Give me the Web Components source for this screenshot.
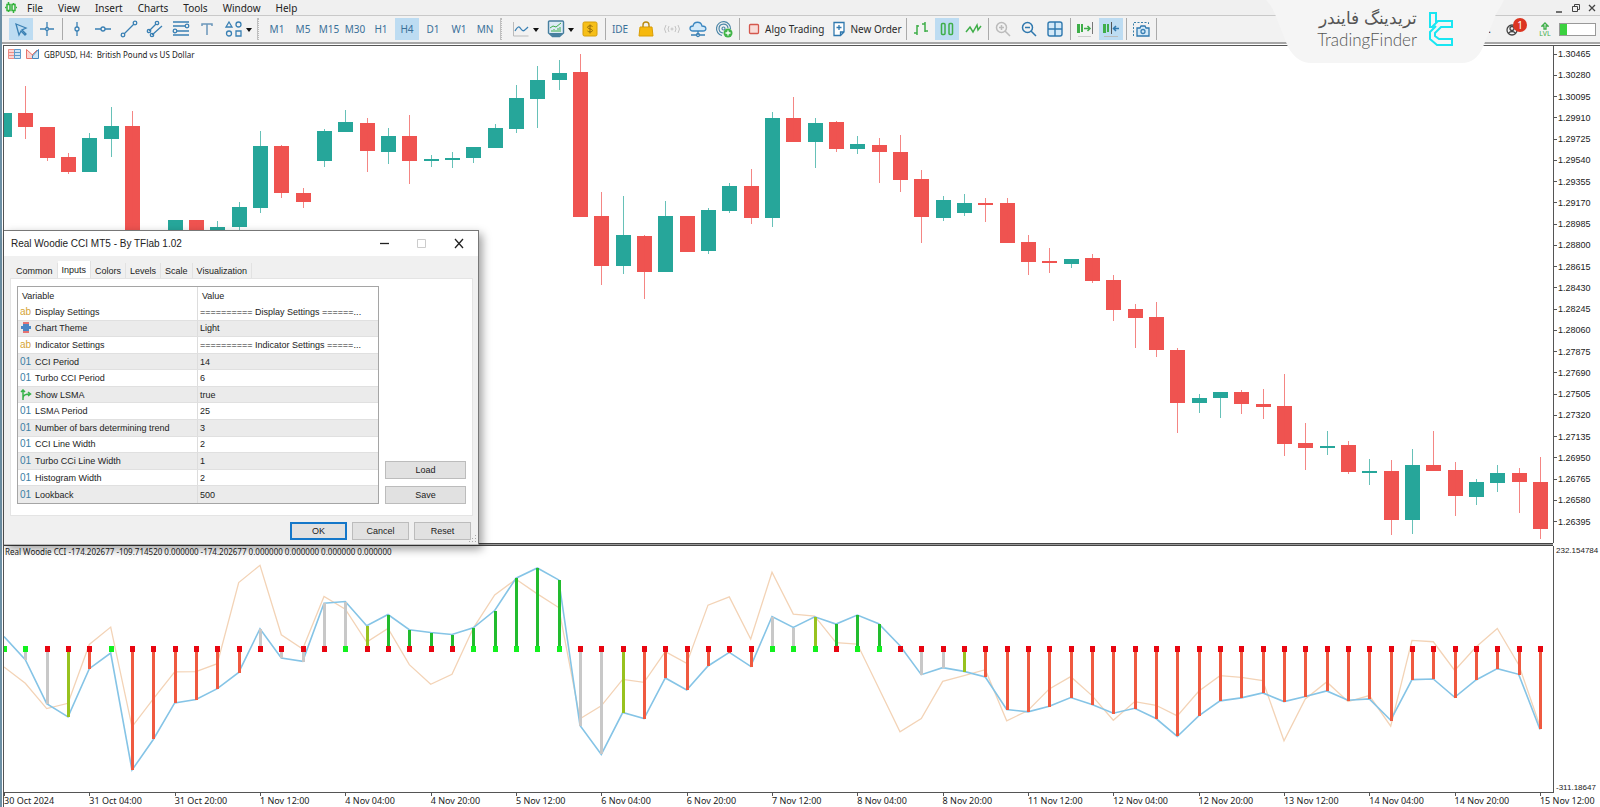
<!DOCTYPE html>
<html lang="en">
<head>
<meta charset="utf-8">
<title>GBPUSD, H4</title>
<style>
  html, body { margin: 0; height: 100%; }
  body { font-family: "Noto Sans", "Open Sans", sans-serif; font-size: 10px; color: #222; background: #fff; overflow: hidden; --compact: "Liberation Sans", Arial, sans-serif; }
</style>
</head>
<body>
<trade-terminal>
  <menu-bar slot="menu"></menu-bar>
  <tool-bar slot="tools"></tool-bar>
  <price-pane slot="price"></price-pane>
  <cci-pane slot="indicator"></cci-pane>
  <time-axis slot="time"></time-axis>
  <inputs-dialog slot="dialog"></inputs-dialog>
  <brand-badge slot="brand"></brand-badge>
</trade-terminal>

<script>
// each row: [up, bodyTop, bodyBottom, wickTop, wickBottom]
const CANDLES = [
  [1,113,137,113,137],[0,113,127,86,139],[0,127,158,127,161],[0,157,172,153,174],[1,138,172,133,172],
  [1,126,139,107,157],[0,126,262,111,270],[0,262,274,250,280],[1,220,262,220,270],[0,220,240,220,250],
  [1,227,240,221,250],[1,207,227,202,230],[1,146,208,131,213],[0,146,193,145,198],[0,193,202,188,208],
  [1,131,161,129,167],[1,122,132,110,132],[0,123,151,118,172],[1,136,152,128,164],[0,136,161,115,184],
  [1,159,161,155,167],[1,158,160,152,168],[1,147,158,147,163],[1,128,148,124,148],[1,98,129,85,133],
  [1,80,99,66,128],[1,73,80,60,90],[0,72,217,54,217],[0,216,266,192,285],[1,235,266,196,274],
  [0,236,272,235,299],[1,216,272,201,272],[0,216,252,216,252],[1,210,251,208,254],[1,186,211,183,213],
  [0,186,218,169,224],[1,118,218,112,227],[0,118,142,97,142],[1,123,142,118,168],[0,122,149,121,152],
  [1,144,149,136,154],[0,145,152,138,183],[0,152,180,135,192],[0,179,217,170,243],[1,200,218,196,221],
  [1,203,213,194,216],[0,203,205,198,222],[0,203,243,198,243],[0,242,262,235,275],[0,261,263,248,273],
  [1,259,264,259,268],[0,258,281,254,283],[0,280,310,275,321],[0,309,318,304,348],[0,317,350,302,357],
  [0,350,403,348,432],[1,398,403,394,413],[1,392,398,392,417],[0,392,404,390,414],[0,404,407,389,418],
  [0,406,443,374,455],[0,442,447,422,469],[1,445,447,430,454],[0,444,471,440,473],[1,470,472,458,484],
  [0,470,519,459,534],[1,464,519,448,533],[0,464,470,430,470],[0,469,495,461,515],[1,481,496,478,504],
  [1,472,482,464,491],[0,472,481,467,512],[0,481,528,456,538]
];

// CCI and turbo CCI, in thirds of a plot unit
const CCI = [290,360,492,532,387,340,692,600,490,480,447,398,267,355,365,190,185,258,224,270,278,284,264,212,
  115,84,120,558,645,519,537,415,451,379,338,380,230,263,231,253,226,252,318,405,384,395,412,510,517,500,474,
  495,521,506,537,591,529,484,475,460,486,471,454,482,478,542,420,418,473,421,387,404,570];
const TURBO = [382,431,507,491,314,262,562,478,397,396,372,128,76,285,328,170,208,307,266,375,434,404,265,165,
  118,162,203,538,499,419,428,336,371,196,171,298,97,223,229,309,313,445,577,537,425,408,390,544,513,448,411,
  468,542,486,497,529,455,408,413,423,604,478,427,486,468,560,302,306,392,322,266,375,560];
// histogram state per bar: x neutral, y turning, r down, g up, - none
const TREND = "-xxyr-rrrrrrxxxxxygggggggggxxyrrrrrrxxyggg-xxyrrrrrrrrrrrrrrrrrrrrrrrrrrr";
const LSMA_UP = [0,1,5,16,22,23,24,25,26,36,37,38,40,41];
const STEP = 1536 / 72;

const TIMES = ["30 Oct 2024","31 Oct 04:00","31 Oct 20:00","1 Nov 12:00","4 Nov 04:00","4 Nov 20:00","5 Nov 12:00",
  "6 Nov 04:00","6 Nov 20:00","7 Nov 12:00","8 Nov 04:00","8 Nov 20:00","11 Nov 12:00","12 Nov 04:00",
  "12 Nov 20:00","13 Nov 12:00","14 Nov 04:00","14 Nov 20:00","15 Nov 12:00"];

const INPUTS = [
  ["ab","Display Settings","========== Display Settings ======..."],
  ["theme","Chart Theme","Light"],
  ["ab","Indicator Settings","========== Indicator Settings =====..."],
  ["01","CCI Period","14"],
  ["01","Turbo CCI Period","6"],
  ["bool","Show LSMA","true"],
  ["01","LSMA Period","25"],
  ["01","Number of bars determining trend","3"],
  ["01","CCI Line Width","2"],
  ["01","Turbo CCi Line Width","1"],
  ["01","Histogram Width","2"],
  ["01","Lookback","500"]
];

// 20x20 toolbar icons, drawn around the centre (10, 10)
const B = 'fill="none" stroke="#3a80b4" stroke-width="1.3"';
const G = 'fill="none" stroke="#3fae49" stroke-width="1.5"';
const ICONS = {
  cursor: `<path ${B} d="M5 5l10 4-4 2 4 4-1 1-4-4-2 4z"/>`,
  cross: `<path ${B} d="M10 3v5M10 12v5M3 10h5M12 10h5"/><circle ${B} cx="10" cy="10" r="1.5"/>`,
  vline: `<path ${B} d="M10 3v5M10 12v5"/><circle ${B} cx="10" cy="10" r="2"/>`,
  hline: `<path ${B} d="M2 10h6M12 10h6"/><circle ${B} cx="10" cy="10" r="2"/>`,
  trend: `<path ${B} d="M5 15L15 5"/><circle ${B} cx="4" cy="16" r="1.8"/><circle ${B} cx="16" cy="4" r="1.8"/>`,
  channel: `<path ${B} d="M4 12l7-7M7 16L17 7"/><circle ${B} cx="4" cy="12" r="1.7"/><circle ${B} cx="12" cy="4" r="1.7"/><circle ${B} cx="7" cy="16" r="1.7"/>`,
  fib: `<path ${B} d="M2 3h16M2 7h12M6 12h12M2 16h16"/><circle ${B} cx="16" cy="7" r="1.8"/><circle ${B} cx="4" cy="12" r="1.8"/>`,
  label: `<path fill="none" stroke="#6b97ba" stroke-width="1.5" d="M5 7V5h10v2M10 5v11"/>`,
  shapes: `<path ${B} d="M5 3l3 5H2zM12 12h5v5h-5z"/><circle ${B} cx="14.500" cy="5.500" r="2.500"/><circle ${B} cx="5" cy="14.500" r="2.500"/>`,
  chart: `<path fill="none" stroke="#bbb" d="M2.500 3v14h15"/><path ${B} d="M4 12c3-5 4-5 6-2s3 2 7-2"/>`,
  indicators: `<path fill="#dcebf5" stroke="#477f9f" stroke-width="1.400" d="M2.500 3q0-1 1-1h13q1 0 1 1v11l-4 3.500h-7L2.500 14z"/><path fill="#477f9f" d="M3 14h14l-4 3.500H7z"/><path fill="none" stroke="#3fae49" d="M4 9l3-2 3 1 5-4M6 13v-2M8 13v-3M10 13v-2M12 13V9M14 13V8"/>`,
  deposit: `<rect x="3" y="3" width="14" height="14" rx="1.500" fill="#f6bf18" stroke="#d59e0a"/><path fill="none" stroke="#936b08" d="M12.500 7.500c-1-1-5-1-5 .8s5 1.400 5 3.200-4 1.800-5 .5M10 5.500v9"/>`,
  market: `<path fill="#f6b90e" stroke="#d99d07" d="M4 8h12l1 9H3z"/><path fill="none" stroke="#b98a10" stroke-width="1.400" d="M7 8V6c0-4 6-4 6 0v2"/>`,
  signal: `<g fill="none" stroke="#c4c4c4"><path d="M4 6q-3 4 0 8M16 6q3 4 0 8M7 7q-2 3 0 6M13 7q2 3 0 6"/><circle cx="10" cy="10" r="1"/></g>`,
  cloud: `<path fill="#d3e9f8" stroke="#3a86c0" stroke-width="1.300" d="M5 12c-4 0-4-5 0-5 1-5 8-5 9 0 5 0 5 5 1 5z"/><path ${B} d="M10 12v4M3 16h5M12 16h5"/><circle ${B} cx="10" cy="16" r="1.500"/>`,
  vps: `<g fill="none" stroke="#4d87a8" stroke-width="1.200"><path d="M8 16.500A7 7 0 1 1 16.500 10M9 14a4.500 4.500 0 1 1 5-5"/><circle cx="9.500" cy="9.500" r="1.500"/></g><circle cx="14" cy="14" r="4.500" fill="#42b549"/><path stroke="#fff" stroke-width="1.300" d="M11.500 14h5M14 11.500v5"/>`,
  algo: `<rect x="5.500" y="5.500" width="9" height="9" rx="1" fill="#f8dcd8" stroke="#d4574d" stroke-width="1.300"/>`,
  order: `<path fill="#fff" stroke="#2f78ae" stroke-width="1.300" d="M5 3.500h10V13l-3.500 3.500H5zM15 13h-3.500v3.500"/><path stroke="#2f78ae" stroke-width="1.300" d="M10 6v5M7.500 8.500h5"/>`,
  bars: `<path ${G} d="M6 6v10M3 14h3M6 7h2M14 3v10M11 5h3M14 12h3"/>`,
  candles: `<rect ${G} x="4.500" y="4.500" width="3.500" height="11" rx="1"/><rect ${G} x="12" y="4.500" width="3.500" height="11" rx="1"/>`,
  line: `<path ${G} d="M3 13l4-5 3 5 4-7 1 5 3-4"/>`,
  zoomin: `<g fill="none" stroke="#bbb" stroke-width="1.500"><circle cx="8.500" cy="8.500" r="5"/><path d="M12 12l5 5M6 8.500h5M8.500 6v5"/></g>`,
  zoomout: `<g fill="none" stroke="#2f78ae" stroke-width="1.500"><circle cx="8.500" cy="8.500" r="5"/><path d="M12 12l5 5M6 8.500h5"/></g>`,
  grid: `<rect x="3" y="3" width="14" height="14" rx="2" fill="#d3e9f8" stroke="#2f78ae" stroke-width="1.400"/><path stroke="#2f78ae" stroke-width="1.400" d="M10 3v14M3 10h14"/>`,
  scroll: `<path fill="#3fae49" d="M2 5h3v9H2zM6 5h2v8H6z"/><path ${G} d="M9 9.500h6M12.500 7l2.500 2.500-2.500 2.500"/><path stroke="#777" d="M17.500 3v12"/><path stroke="#ccc" d="M3 17.500h13"/>`,
  shift: `<path fill="#3fae49" d="M2 5h3v9H2zM6 5h2v8H6z"/><path stroke="#555" d="M10.500 3v12"/><path fill="none" stroke="#2f78ae" stroke-width="1.500" d="M18 9.500h-5M15 7l-2.500 2.500L15 12"/><path stroke="#bbb" d="M3 17.500h14"/>`,
  camera: `<path fill="none" stroke="#3a7fa8" stroke-dasharray="2 1.500" d="M2.500 17V3.500h15V6"/><path fill="#d3e9f8" stroke="#2f78ae" stroke-width="1.300" d="M6 9h3l1-2h4l1 2h3v8H6z"/><circle ${B} cx="12" cy="12.500" r="2"/>`
};

function icon(name) {
  return `<svg viewBox="0 0 20 20" width="20" height="20" aria-hidden="true">${ICONS[name]}</svg>`;
}

class TradeTerminal extends HTMLElement {
  connectedCallback() {
    this.attachShadow({ mode: "open" }).innerHTML = `
      <style>
        :host { display: flex; flex-direction: column; height: 100vh; position: relative; box-sizing: border-box; border-left: 2px solid #6d90a5; }
        .charts { flex: 1; min-height: 0; display: flex; flex-direction: column; margin-left: 1px; border-left: 1px solid #555; border-top: 1px solid #555; }
        .price { flex: 496; min-height: 0; display: grid; }
        .split { height: 3px; box-sizing: border-box; border-top: 1px solid #444; border-bottom: 1px solid #444; background: #999; margin-right: 47px; }
        .indicator { flex: 247; min-height: 0; display: grid; }
        slot[name="dialog"]::slotted(*) { position: absolute; left: 2px; top: 230px; }
        slot[name="brand"]::slotted(*) { position: absolute; right: 96px; top: 0; }
      </style>
      <slot name="menu"></slot>
      <slot name="tools"></slot>
      <div class="charts">
        <div class="price"><slot name="price"></slot></div>
        <div class="split"></div>
        <div class="indicator"><slot name="indicator"></slot></div>
        <slot name="time"></slot>
      </div>
      <slot name="dialog"></slot>
      <slot name="brand"></slot>`;
  }
}

class MenuBar extends HTMLElement {
  connectedCallback() {
    const items = ["File", "View", "Insert", "Charts", "Tools", "Window", "Help"];
    this.attachShadow({ mode: "open" }).innerHTML = `
      <style>
        :host { display: flex; align-items: center; height: 15px; background: #f0f0f0; border-bottom: 1px solid #c9c9c9; padding: 0 3px 0 3px; font-size: 10px; }
        nav { display: flex; flex: 1; margin-left: 10px; gap: 15px; }
        button { font: inherit; line-height: 14px; color: #222; border: 0; padding: 0; background: none; }
        .win { display: flex; gap: 7px; }
        .win button { display: flex; }
      </style>
      <svg width="12" height="13" viewBox="0 0 12 13" aria-hidden="true"><g fill="none" stroke="#35b33c" stroke-width="1.500"><path d="M3.500 1v2M3.500 9v2M8.500 2v2M8.500 10v2M0 6.500h1.500M11 6.500h1"/><rect x="2" y="3.500" width="3" height="6"/><rect x="7" y="3.500" width="3" height="6"/></g></svg>
      <nav>${items.map(t => `<button>${t}</button>`).join("")}</nav>
      <div class="win">
        <button aria-label="Minimize"><svg width="9" height="10"><path stroke="#444" stroke-width="1.500" d="M1 9h6"/></svg></button>
        <button aria-label="Restore"><svg width="10" height="10"><path fill="none" stroke="#444" d="M3.500 3V1.500h5v5H7M1.500 3.500h5v5h-5z"/></svg></button>
        <button aria-label="Close"><svg width="9" height="10"><path stroke="#444" stroke-width="1.300" d="M1 2l6 6M7 2L1 8"/></svg></button>
      </div>`;
  }
}

class ToolButton extends HTMLElement {
  connectedCallback() {
    const name = this.getAttribute("icon");
    const label = this.getAttribute("label") || name;
    this.attachShadow({ mode: "open" }).innerHTML = `
      <style>
        :host { display: flex; flex: none; min-width: 26px; justify-content: center; }
        button { display: flex; align-items: center; justify-content: center; min-width: 24px; height: 22px; padding: 0; border: 0; background: none; font: inherit; color: inherit; white-space: nowrap; }
        :host([on]) button { background: #bddcf2; }
        svg { flex: none; }
        :host([text]) { color: #2b2b2b; }
        :host([text]) button { padding: 0 2px 0 3px; gap: 1px; }
        :host([drop]) { margin-right: 9px; }
        i { width: 0; margin: 2px -10px 0 2px; border: 3px solid transparent; border-top: 4px solid #111; border-bottom: 0; }
      </style>
      <button aria-label="${label}">${name ? icon(name) : ""}<slot></slot>${this.hasAttribute("drop") ? "<i></i>" : ""}</button>`;
  }
}

class ToolBar extends HTMLElement {
  connectedCallback() {
    const t = (names, on) => names.split(" ").map(n => `<tool-button icon="${n}"${n === on ? " on" : ""}></tool-button>`).join("");
    const frames = ["M1", "M5", "M15", "M30", "H1", "H4", "D1", "W1", "MN"];
    this.attachShadow({ mode: "open" }).innerHTML = `
      <style>
        :host { display: flex; align-items: center; height: 26px; padding-left: 6px; background: #f2f2f2; border-bottom: 2px solid #a6a6a6; box-shadow: 0 1px #fff; margin-bottom: 1px; color: #3a7099; }
        s { flex: none; width: 1px; height: 22px; margin: 0 1px 0 2px; background: #aaa; }
        s.grip { margin: 0 5px 0 2px; width: 0; background: none; border-left: 1px solid #c0c0c0; border-right: 1px dotted #bbb; }
        .status { display: flex; align-items: center; gap: 7px; margin-left: auto; padding-right: 4px; color: #222; }
        .account { position: relative; display: flex; margin: 0 5px 0 8px; }
        .badge { position: absolute; left: 7px; top: -4px; width: 14px; height: 14px; border-radius: 50%; background: #dc3420; color: #fff; font-size: 10px; line-height: 14px; text-align: center; }
        .lvl { display: flex; flex-direction: column; align-items: center; width: 14px; color: #3fae49; font-size: 7px; line-height: 7px; }
        .battery { width: 37px; height: 13px; box-sizing: border-box; border: 1px solid #999; background: linear-gradient(90deg, #3bd13f 7px, #fff 7px); }
      </style>
      ${t("cursor cross", "cursor")}<s></s>
      ${t("vline hline trend channel fib label")}<tool-button icon="shapes" drop></tool-button><s class="grip"></s>
      ${frames.map(f => `<tool-button label="${f}"${f === "H4" ? " on" : ""}>${f}</tool-button>`).join("")}<s class="grip"></s>
      <tool-button icon="chart" drop></tool-button><tool-button icon="indicators" drop></tool-button>${t("deposit")}<s></s>
      <tool-button label="IDE">IDE</tool-button>${t("market signal cloud vps")}<s></s>
      <tool-button icon="algo" label="Algo Trading" text>Algo Trading</tool-button>
      <tool-button icon="order" label="New Order" text>New Order</tool-button><s></s>
      ${t("bars candles line", "candles")}<s></s>
      ${t("zoomin zoomout grid")}<s></s>
      ${t("scroll shift", "shift")}<s></s>${t("camera")}<s></s>
      <div class="status">
        <span>.</span>
        <span class="account">
          <svg width="20" height="14" aria-hidden="true"><g fill="none" stroke="#444" stroke-width="1.300"><circle cx="6" cy="8" r="5"/><circle cx="6" cy="6.500" r="2"/><path d="M2.500 11q3.500-3 7 0"/></g></svg>
          <span class="badge">1</span>
        </span>
        <span class="lvl"><svg width="8" height="8" aria-hidden="true"><path fill="none" stroke="#3fae49" stroke-width="1.300" d="M4 1l3 3H5v3H3V4H1z"/></svg>LVL</span>
        <span class="battery"></span>
      </div>`;
  }
}

class PricePane extends HTMLElement {
  connectedCallback() {
    const bars = CANDLES.map(([up, top, bottom, high, low], i) => {
      const x = Math.round(i * STEP);
      const fill = up ? "#26a69a" : "#ef5350";
      return `<path fill="${fill}" d="M${x - 7} ${top - 46}h15v${bottom - top}h-15z"/><path fill="${fill}" opacity=".7" d="M${x} ${high - 46}h1v${low - high}h-1z"/>`;
    }).join("");
    const prices = Array.from({ length: 23 }, (_, i) => ((130465 - 185 * i) / 100000).toFixed(5));
    this.attachShadow({ mode: "open" }).innerHTML = `
      <style>
        :host { display: grid; grid-template: minmax(0, 1fr) / minmax(0, 1fr) 46px; min-height: 0; font-size: 8px; }
        .plot { position: relative; min-height: 0; border-right: 1px solid #555; }
        .plot > svg { display: block; width: 100%; height: 100%; }
        header { position: absolute; left: 4px; top: 0; display: flex; align-items: center; gap: 4px; height: 16px; white-space: pre; }
        ol { display: flex; flex-direction: column; justify-content: space-between; margin: 0; padding: 2px 0 15px; list-style: none; font-family: var(--compact); font-size: 9px; line-height: 12px; }
        li { display: flex; align-items: center; gap: 1px; }
        li::before { content: ""; width: 3px; height: 1px; background: #555; }
      </style>
      <div class="plot">
        <svg viewBox="0 0 1549 496" preserveAspectRatio="none" shape-rendering="crispEdges">${bars}</svg>
        <header>
          <svg width="14" height="11"><path fill="#fbd5d2" stroke="#eb8d86" d="M.5.500h6v9h-6zM.5 3.500h6M.5 6.500h6"/><path fill="#cfe4f4" stroke="#5f9bca" d="M6.500.500h6v9h-6zM6.500 3.500h6M6.500 6.500h6"/></svg>
          <svg width="14" height="11"><path fill="#fbd5d2" stroke="#e8746c" d="M.5.500v9h6V6z"/><path fill="#cfe4f4" stroke="#4387bd" d="M12.500.500v9h-6V7z"/><path fill="none" stroke="#e8746c" d="M6 6l5-5"/></svg>
          <span>GBPUSD, H4:  British Pound vs US Dollar</span>
        </header>
      </div>
      <ol>${prices.map(p => `<li>${p}</li>`).join("")}</ol>`;
  }
}

class CciPane extends HTMLElement {
  connectedCallback() {
    const y = v => v / 3 - 6;
    const line = data => data.map((v, i) => `${(i * STEP).toFixed(1)},${y(v).toFixed(1)}`).join(" ");
    const colors = { x: "#c8c8c8", y: "#98c21f", r: "#ef5a40", g: "#22bb2e" };
    const bars = CCI.map((v, i) => {
      const fill = colors[TREND[i]];
      if (!fill) return "";
      const a = Math.round(Math.min(y(v), 103));
      const b = Math.round(Math.max(y(v), 103));
      return `<path fill="${fill}" d="M${Math.round(i * STEP) - 1} ${a}h3v${b - a}h-3z"/>`;
    }).join("");
    const dots = CCI.map((v, i) => `<path fill="${LSMA_UP.includes(i) ? "#12f01e" : "#e80510"}" d="M${Math.round(i * STEP) - 2} 100h5v6h-5z"/>`).join("");
    this.attachShadow({ mode: "open" }).innerHTML = `
      <style>
        :host { display: grid; grid-template: minmax(0, 1fr) / minmax(0, 1fr) 46px; min-height: 0; font-size: 8px; }
        .plot { position: relative; min-height: 0; border-right: 1px solid #555; border-bottom: 1px solid #555; }
        svg { display: block; width: 100%; height: 100%; }
        .title { position: absolute; left: 1px; top: 0; line-height: 12px; }
        .scale { display: flex; flex-direction: column; justify-content: space-between; padding-left: 2px; font-family: var(--compact); line-height: 10px; }
      </style>
      <div class="plot">
        <svg viewBox="0 0 1549 247" preserveAspectRatio="none">
          <polyline fill="none" stroke="#f3d3b6" stroke-width="1.300" points="${line(TURBO)}"/>
          <polyline fill="none" stroke="#85c4e6" stroke-width="1.600" points="${line(CCI)}"/>
          <g shape-rendering="crispEdges">${bars}${dots}</g>
        </svg>
        <span class="title">Real Woodie CCI -174.202677 -109.714520 0.000000 -174.202677 0.000000 0.000000 0.000000 0.000000</span>
      </div>
      <div class="scale"><span>232.154784</span><span>-311.18647</span></div>`;
  }
}

class TimeAxis extends HTMLElement {
  connectedCallback() {
    this.attachShadow({ mode: "open" }).innerHTML = `
      <style>
        :host { display: flex; height: 14px; margin-right: 47px; font-size: 9px; line-height: 15px; }
        span { flex: 4 0 0; width: 0; white-space: nowrap; background: linear-gradient(#555, #555) 0 0 / 1px 3px no-repeat; }
        span:last-child { flex-grow: .61; }
      </style>
      ${TIMES.map(t => `<span>${t}</span>`).join("")}`;
  }
}

class InputsDialog extends HTMLElement {
  connectedCallback() {
    const kinds = {
      ab: '<b class="ab">ab</b>',
      "01": '<b>01</b>',
      theme: '<svg width="12" height="12"><path fill="#e57373" d="M3 0h6v3H3zM3 8h6v3H3z"/><path fill="#4a86c5" d="M1 4h10v3H1zM3 2h6v7H3z"/></svg>',
      bool: '<svg width="12" height="12"><path fill="none" stroke="#37b34a" stroke-width="1.500" d="M3 11V1M1 3l2-2 2 2M3 9q0-4 7-4M8 3l2.500 2L8 7"/></svg>'
    };
    const rows = INPUTS.map(([kind, name, value]) =>
      `<tr><td><span class="name">${kinds[kind]}${name}</span></td><td>${value}</td></tr>`).join("");
    const tabs = ["Common", "Inputs", "Colors", "Levels", "Scale", "Visualization"];
    this.attachShadow({ mode: "open" }).innerHTML = `
      <style>
        :host { display: flex; flex-direction: column; width: 475px; height: 315px; background: #f0f0f0; border: 1px solid #777; border-left: 0; border-bottom-color: #bbb; box-sizing: border-box; box-shadow: 3px 4px 9px rgba(0, 0, 0, .4); font-family: var(--compact); font-size: 9px; }
        header { display: flex; align-items: center; height: 25px; padding: 0 13px 0 7px; background: #fff; font-size: 10px; line-height: 14px; }
        header span { flex: 1; }
        header button { display: flex; margin-left: 26px; padding: 0; border: 0; background: none; }
        .tabs { display: flex; align-items: flex-end; margin: 5px 0 0 8px; height: 17px; }
        .tabs button { height: 15px; padding: 0 4px; border: 0; border-right: 1px solid #e2e2e2; background: none; font: inherit; color: inherit; }
        .tabs button[aria-selected="true"] { height: 17px; background: #fff; }
        .panel { flex: 1; min-height: 0; display: flex; gap: 6px; margin: 0 5px 0 6px; padding: 7px 6px 11px; background: #fff; border: 1px solid #e4e4e4; }
        table { width: 362px; border-collapse: separate; border-spacing: 0; border: 1px solid #a5a5a5; table-layout: fixed; line-height: 12px; }
        th, td { height: 15px; padding: 0 2px; font-weight: normal; text-align: left; white-space: nowrap; box-sizing: border-box; }
        th { height: 17px; padding: 0 4px; }
        th:first-child, td:first-child { border-right: 1px solid #ddd; }
        td { border-bottom: 1px solid #e0e0e0; }
        tr:last-child td { border-bottom: 0; }
        tbody tr:nth-child(even) { background: #ebebeb; }
        .name { display: flex; align-items: center; gap: 3px; }
        b { width: 12px; color: #3b80a5; font-weight: normal; font-size: 10px; line-height: 12px; }
        b.ab { color: #d6a437; }
        .side { flex: 1; display: flex; flex-direction: column; justify-content: flex-end; gap: 7px; }
        .act { height: 18px; padding: 0; border: 1px solid #bcbcbc; background: #e1e1e1; font: inherit; color: inherit; }
        .act.ok { border: 2px solid #1477c9; }
        footer { position: relative; display: flex; justify-content: flex-end; gap: 5px; padding: 6px 7px 4px; }
        footer .act { width: 57px; }
        footer svg { position: absolute; right: 0; bottom: 0; }
      </style>
      <header>
        <span>Real Woodie CCI MT5 - By TFlab 1.02</span>
        <button aria-label="Minimize"><svg width="11" height="11"><path stroke="#222" stroke-width="1.300" d="M1 5.500h9"/></svg></button>
        <button aria-label="Maximize"><svg width="11" height="11"><path fill="none" stroke="#ccc" d="M1.500 1.500h8v8h-8z"/></svg></button>
        <button aria-label="Close"><svg width="12" height="11"><path stroke="#222" stroke-width="1.300" d="M2 1l8 9M10 1l-8 9"/></svg></button>
      </header>
      <div class="tabs" role="tablist">${tabs.map(t => `<button role="tab" aria-selected="${t === "Inputs"}">${t}</button>`).join("")}</div>
      <div class="panel">
        <table>
          <colgroup><col style="width: 50%"><col></colgroup>
          <thead><tr><th>Variable</th><th>Value</th></tr></thead>
          <tbody>${rows}</tbody>
        </table>
        <div class="side"><button class="act">Load</button><button class="act">Save</button></div>
      </div>
      <footer>
        <button class="act ok">OK</button><button class="act">Cancel</button><button class="act">Reset</button>
        <svg width="9" height="9" aria-hidden="true"><path fill="#aaa" d="M6 0h1v1H6zM3 3h1v1H3zM6 3h1v1H6zM0 6h1v1H0zM3 6h1v1H3zM6 6h1v1H6z"/></svg>
      </footer>`;
  }
}

class BrandBadge extends HTMLElement {
  connectedCallback() {
    this.attachShadow({ mode: "open" }).innerHTML = `
      <style>
        :host { display: grid; width: 238px; height: 63px; }
        svg, .row { grid-area: 1 / 1; }
        .row { display: flex; align-items: flex-start; gap: 12px; padding: 8px 51px 0 44px; color: #555; }
        .names { flex: 1; display: flex; flex-direction: column; text-align: right; white-space: nowrap; font-family: Lato, "DejaVu Sans", sans-serif; font-weight: 300; font-size: 17px; line-height: 21px; }
        .names [lang="fa"] { font-family: "DejaVu Sans", sans-serif; }
        .logo { margin-top: 4px; }
      </style>
      <svg width="238" height="63" aria-hidden="true"><path fill="#f5f5f5" d="M0 0h238q-3 6-8 14l-13 33q-7 16-21 16H45q-14 0-23-16L9 14Q6 6 0 0z"/></svg>
      <div class="row">
        <span class="names"><span lang="fa" dir="rtl">تریدینگ فایندر</span><span>TradingFinder</span></span>
        <svg class="logo" width="24" height="34" viewBox="0 0 24 34" aria-hidden="true"><path fill="none" stroke="#19e6f2" stroke-width="2" d="M7 11V1H1v14h2l6-6h14v6H12l-6 6v3l4 3h13v6H8l-7-6v-7l6-6"/></svg>
      </div>`;
  }
}

customElements.define("tool-button", ToolButton);
customElements.define("menu-bar", MenuBar);
customElements.define("tool-bar", ToolBar);
customElements.define("price-pane", PricePane);
customElements.define("cci-pane", CciPane);
customElements.define("time-axis", TimeAxis);
customElements.define("inputs-dialog", InputsDialog);
customElements.define("brand-badge", BrandBadge);
customElements.define("trade-terminal", TradeTerminal);
</script>
</body>
</html>
